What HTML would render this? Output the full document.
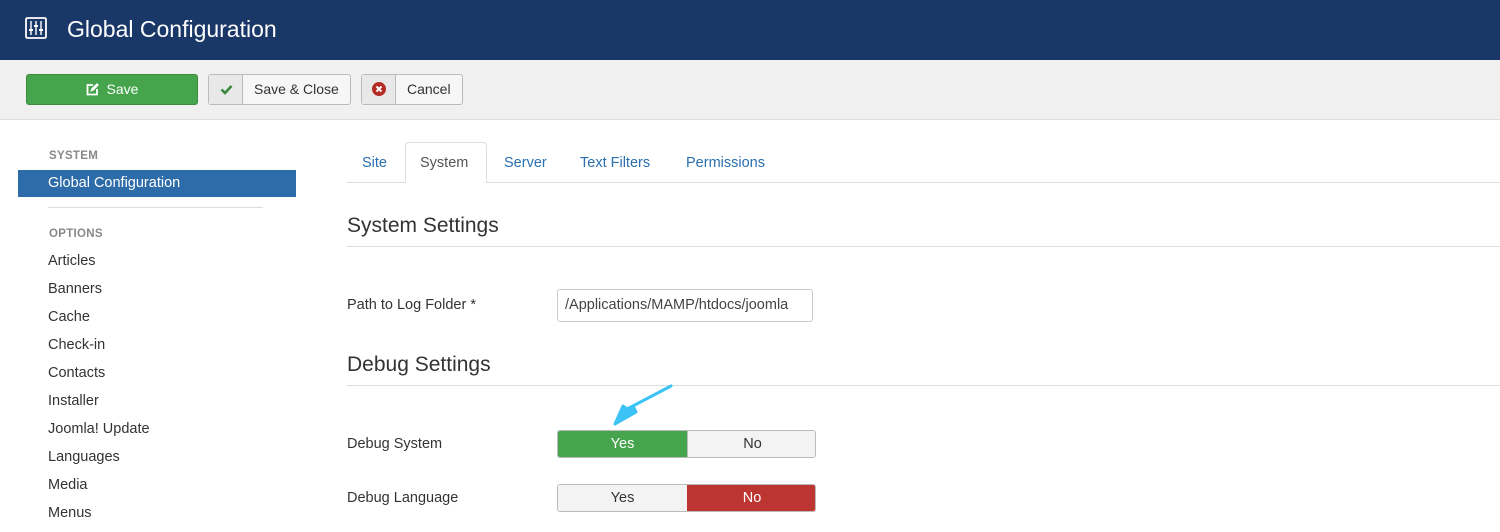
<!DOCTYPE html>
<html><head><style>
*{box-sizing:border-box;margin:0;padding:0}
body{width:1500px;height:532px;overflow:hidden;background:#fff;font-family:"Liberation Sans",sans-serif;color:#333;position:relative}
.a{position:absolute}
.hdr{left:0;top:0;width:1500px;height:60px;background:#1a3867}
.tb{left:0;top:60px;width:1500px;height:60px;background:#f0f0f0;border-bottom:1px solid #ddd}
.btn{position:absolute;top:74px;height:31px;border:1px solid #bbb;border-radius:3px;background:#f6f6f6;font-size:14px;line-height:29px;color:#333}
.side{font-size:14.5px;color:#333}
.lbl{font-size:11.5px;font-weight:bold;color:#888;letter-spacing:.3px}
.tab{position:absolute;top:155px;font-size:14.5px;color:#2a6fb0}
.tg{position:absolute;left:557px;width:259px;height:28px;border:1px solid #bbb;border-radius:3px;overflow:hidden;font-size:14.5px}
.tg div{position:absolute;top:0;height:100%;line-height:26px;text-align:center}
</style></head><body>
<div class="a hdr"></div>
<svg class="a" style="left:25px;top:17px" width="22" height="22" viewBox="0 0 22 22" fill="none" stroke="#fff" stroke-width="1.8"><rect x="1" y="1" width="20" height="20" rx="1.5"/><path d="M6 4v14M11 4v14M16 4v14" stroke-width="1.4"/><path d="M4 13h4M9 9h4M14 13h4" stroke-width="2"/></svg>
<div class="a" style="left:67px;top:16px;font-size:23px;color:#fff">Global Configuration</div>
<div class="a tb"></div>
<div class="btn" style="left:26px;width:172px;background:#46a44c;border-color:#3b8c41;color:#fff;text-align:center">
<svg style="vertical-align:-2px;margin-right:8px" width="13" height="13" viewBox="0 0 13 13" fill="none" stroke="#fff" stroke-width="1.8"><path d="M7 2H1.5v9.5H11V6"/><path d="M5 8l1-2.5L11 .8l1.2 1.2L7.5 7z" fill="#fff" stroke-width="1"/></svg>Save</div>
<div class="btn" style="left:208px;width:143px"><div class="a" style="left:0;top:0;width:34px;height:29px;background:#e8e8e8;border-right:1px solid #bbb"><svg style="position:absolute;left:11px;top:9px" width="13" height="11" viewBox="0 0 13 11"><path d="M1.5 5.5l3.5 3.5 6.5-7" fill="none" stroke="#378a3c" stroke-width="2.6"/></svg></div><span class="a" style="left:45px">Save &amp; Close</span></div>
<div class="btn" style="left:361px;width:102px"><div class="a" style="left:0;top:0;width:34px;height:29px;background:#e8e8e8;border-right:1px solid #bbb"><svg style="position:absolute;left:10px;top:7px" width="14" height="14" viewBox="0 0 14 14"><circle cx="7" cy="7" r="7" fill="#b52c26"/><path d="M4.5 4.5l5 5M9.5 4.5l-5 5" stroke="#fff" stroke-width="2"/></svg></div><span class="a" style="left:45px">Cancel</span></div>

<div class="a lbl" style="left:49px;top:150px">SYSTEM</div>
<div class="a" style="left:18px;top:170px;width:278px;height:27px;background:#2d6ca8;color:#fff;font-size:14.5px;line-height:26px;padding-left:30px">Global Configuration</div>
<div class="a" style="left:48px;top:207px;width:215px;height:1px;background:#ddd"></div>
<div class="a lbl" style="left:49px;top:228px">OPTIONS</div>
<div class="a side" style="left:48px;top:247px;line-height:28px">Articles<br>Banners<br>Cache<br>Check-in<br>Contacts<br>Installer<br>Joomla! Update<br>Languages<br>Media<br>Menus</div>

<div class="a" style="left:347px;top:182px;width:1153px;height:1px;background:#ddd"></div>
<div class="a" style="left:405px;top:142px;width:82px;height:41px;border:1px solid #ddd;border-bottom:none;border-radius:4px 4px 0 0;background:#fff"></div>
<div class="tab" style="left:362px">Site</div>
<div class="tab" style="left:420px;color:#555">System</div>
<div class="tab" style="left:504px">Server</div>
<div class="tab" style="left:580px">Text Filters</div>
<div class="tab" style="left:686px">Permissions</div>

<div class="a" style="left:347px;top:214px;font-size:21px;color:#333">System Settings</div>
<div class="a" style="left:347px;top:246px;width:1153px;height:1px;background:#ddd"></div>
<div class="a" style="left:347px;top:297px;font-size:14.5px">Path to Log Folder *</div>
<div class="a" style="left:557px;top:289px;width:256px;height:33px;border:1px solid #ccc;border-radius:3px;font-size:14.5px;line-height:31px;padding-left:7px;overflow:hidden;white-space:nowrap;color:#444">/Applications/MAMP/htdocs/joomla</div>
<div class="a" style="left:347px;top:353px;font-size:21px;color:#333">Debug Settings</div>
<div class="a" style="left:347px;top:385px;width:1153px;height:1px;background:#ddd"></div>

<div class="a" style="left:347px;top:436px;font-size:14.5px">Debug System</div>
<div class="tg" style="top:430px"><div style="left:0;width:129px;background:#46a44c;color:#fff">Yes</div><div style="left:129px;width:130px;background:#f3f3f3;color:#333;border-left:1px solid #bbb">No</div></div>
<div class="a" style="left:347px;top:490px;font-size:14.5px">Debug Language</div>
<div class="tg" style="top:484px"><div style="left:0;width:129px;background:#f3f3f3;color:#333">Yes</div><div style="left:129px;width:130px;background:#bd3530;color:#fff">No</div></div>

<svg class="a" style="left:605px;top:382px" width="70" height="50" viewBox="0 0 70 50"><path d="M66 4L28 24l3 6L10 42l8-18 4 3z" fill="#3cc3f5" stroke="#3cc3f5" stroke-width="3" stroke-linejoin="round"/></svg>
</body></html>
